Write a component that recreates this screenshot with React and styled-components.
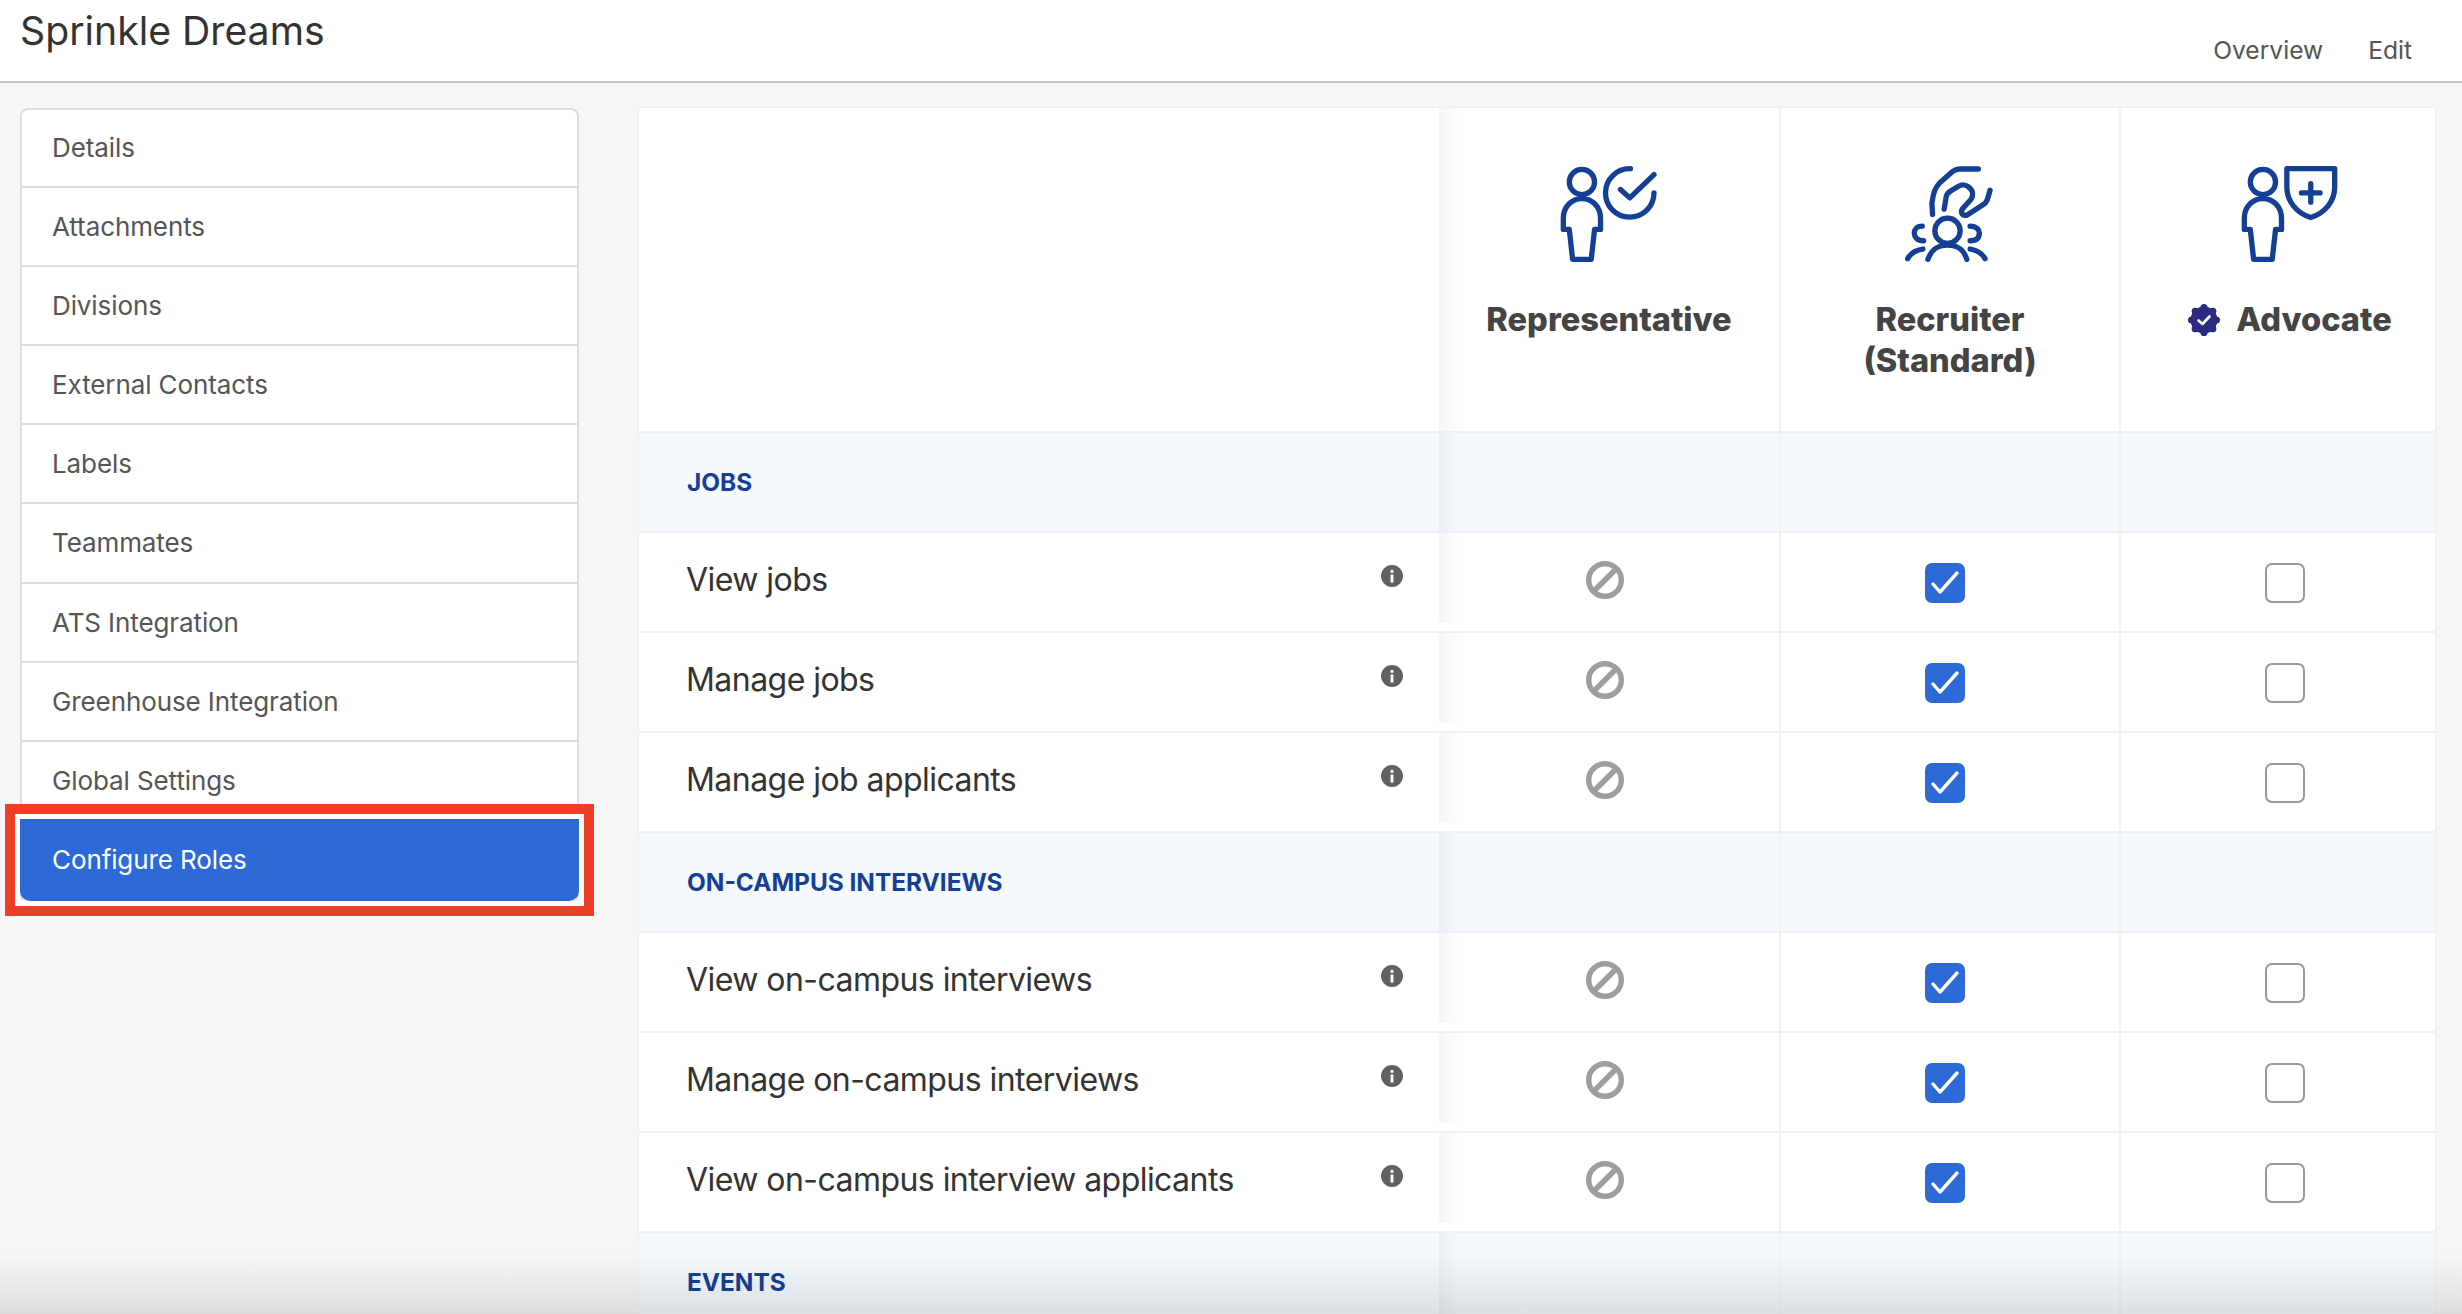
import React from "react";
import styled, { createGlobalStyle } from "styled-components";

const GlobalStyle = createGlobalStyle`
  html, body {
    margin: 0;
    padding: 0;
    background: #f6f6f6;
    font-family: Inter, "Liberation Sans", sans-serif;
  }
`;

const Page = styled.div`
  position: relative;
  width: 2462px;
  height: 1314px;
  overflow: hidden;
  background: #f6f6f6;
`;

const TopBar = styled.header`
  height: 81px;
  background: #fff;
  border-bottom: 2px solid #bcc5cc;
  display: flex;
  justify-content: space-between;
  padding: 0 50px 0 20px;
`;

const Title = styled.h1`
  margin: 8px 0 0;
  font-size: 39.2px;
  line-height: 46px;
  font-weight: 400;
  color: #333;
`;

const TopLinks = styled.nav`
  display: flex;
  gap: 45px;
  padding-top: 32px;
  font-size: 24.6px;
  line-height: 36px;
  color: #555;
`;

const Body = styled.div`
  display: flex;
  align-items: flex-start;
  padding: 25px 0 0 20px;
`;

const Sidebar = styled.ul`
  list-style: none;
  margin: 0 60px 0 0;
  padding: 0;
  flex: 0 0 559px;
  box-sizing: border-box;
  background: #fff;
  border: 2px solid #ddd;
  border-bottom: 0;
  border-radius: 8px 8px 6px 6px;
`;

const SideItem = styled.li`
  box-sizing: border-box;
  height: 79.2px;
  display: flex;
  align-items: center;
  padding-left: 30px;
  font-size: 26px;
  letter-spacing: -0.1px;
  color: #555;
  border-bottom: 2px solid #ddd;

  &:first-child {
    height: 77.6px;
  }
`;

const ActiveItem = styled.li`
  position: relative;
  box-sizing: border-box;
  height: 82px;
  margin: -2px -2px 0;
  display: flex;
  align-items: center;
  padding: 0 0 2px 32px;
  font-size: 26px;
  letter-spacing: -0.1px;
  color: #fff;
  background: #2d6ad8;
  border-radius: 0 0 10px 10px;
`;

const Highlight = styled.span`
  position: absolute;
  top: -15px;
  left: -15px;
  right: -15px;
  bottom: -15px;
  border: 10px solid #ee3f26;
  box-shadow: inset 0 0 0 5px #fff;
  pointer-events: none;
`;

const Panel = styled.section`
  width: 1796px;
  background: #fff;
  overflow: hidden;
  box-shadow: 0 0 0 1px #efefef;
`;

const Row = styled.div`
  display: grid;
  grid-template-columns: 800px 340px 340px 340px;
  width: 1820px;
  box-sizing: border-box;
  height: ${(p) => p.$height || 100}px;
  background: ${(p) => (p.$section ? "#f5f8fd" : "#fff")};
  border-bottom: 2px solid #eef0f2;
`;

const LabelCell = styled.div`
  position: relative;
  box-sizing: border-box;
  height: ${(p) => (p.$full ? "100%" : "90px")};
  display: flex;
  justify-content: space-between;
  padding: 17px 36px 0 47px;
  background: ${(p) => (p.$section ? "#f5f8fd" : "#fff")};

  &::after {
    content: "";
    position: absolute;
    top: 0;
    bottom: 0;
    left: 100%;
    width: 22px;
    background: linear-gradient(to right, rgba(0, 0, 0, 0.035), rgba(0, 0, 0, 0));
  }
`;

const RowLabel = styled.span`
  font-size: 32px;
  line-height: 60px;
  letter-spacing: -0.55px;
  color: #333;
`;

const SectionLabel = styled.span`
  font-size: 24.4px;
  line-height: 36px;
  margin: 14px 0 0 1px;
  font-weight: 700;
  color: #153f94;
`;

const Cell = styled.div`
  display: flex;
  justify-content: center;
  align-items: flex-start;
  padding: 30px 9px 0 0;
  border-left: ${(p) => (p.$first ? "0" : "2px solid #f0f2f4")};
`;

const RoleCell = styled.div`
  display: flex;
  flex-direction: column;
  align-items: center;
  padding-top: 57px;
  border-left: ${(p) => (p.$first ? "0" : "2px solid #f0f2f4")};
`;

const RoleName = styled.div`
  display: flex;
  align-items: center;
  gap: 16px;
  margin-top: 36px;
  font-size: 32.6px;
  line-height: 41px;
  font-weight: 800;
  color: #444;
  text-align: center;
`;

const CheckBox = styled.span`
  box-sizing: border-box;
  width: 40px;
  height: 40px;
  margin-left: -1px;
  border-radius: 7px;
  display: flex;
  align-items: center;
  justify-content: center;
  background: ${(p) => (p.$checked ? "#2d6ad8" : "#fff")};
  border: ${(p) => (p.$checked ? "0" : "2.5px solid #999")};
`;

const BanMark = styled.svg`
  width: 38px;
  height: 38px;
  margin-top: -2px;
`;

const InfoMark = styled.svg`
  width: 22px;
  height: 22px;
  margin-top: 15px;
`;

const BottomFade = styled.div`
  position: absolute;
  left: 0;
  right: 0;
  bottom: 0;
  height: 60px;
  background: linear-gradient(to bottom, rgba(0, 0, 0, 0), rgba(0, 0, 0, 0.1));
  pointer-events: none;
`;

const RoleSvg = styled.svg`
  display: block;
  width: 98px;
  height: 98px;
  fill: none;
  stroke: #153f94;
  stroke-width: 16;
  stroke-linecap: round;
  stroke-linejoin: round;
`;

const PersonShape = () => (
  <>
    <circle cx="246" cy="125" r="38" />
    <path d="M246 175C215 175 190 200 190 235V268H208L218 358H274L284 268H302V235C302 200 277 175 246 175Z" />
  </>
);

const RepresentativeIcon = () => (
  <RoleSvg viewBox="180 75 295 293">
    <PersonShape />
    <path d="M392 85A73 73 0 1 0 463 158" />
    <path d="M362 148L390 173L463 103" />
  </RoleSvg>
);

const RecruiterIcon = () => (
  <RoleSvg viewBox="92 75 295 293">
    <circle cx="232" cy="272" r="38" />
    <path d="M173 358C185 325 205 315 232 315C260 315 280 325 290 358" />
    <path d="M156 258C138 258 132 270 132 278C132 290 140 302 160 302" />
    <path d="M300 258C320 258 328 270 328 278C328 292 320 302 300 302" />
    <path d="M112 356C122 338 135 330 158 327" />
    <path d="M300 327C322 330 335 338 345 356" />
    <path d="M325 86H268C260 86 255 88 248 93L208 128C195 142 190 155 185 190L187 223" />
    <path d="M222 207L227 175C228 165 232 158 240 153L265 138C275 132 285 132 295 140C310 150 310 165 303 177L278 205C270 215 275 228 290 225L340 193C350 187 352 180 360 150" />
  </RoleSvg>
);

const AdvocateIcon = () => (
  <RoleSvg viewBox="180 75 295 293">
    <PersonShape />
    <path d="M318 85H462V140C462 185 430 220 390 232C350 220 318 185 318 140Z" />
    <path d="M362 158H418M390 130V186" />
  </RoleSvg>
);

const VerifiedBadge = () => {
  const bumps = Array.from({ length: 8 }, (_, i) => (i * Math.PI) / 4);
  return (
    <svg width="32" height="32" viewBox="0 0 32 32">
      <circle cx="16" cy="16" r="13.4" fill="#2d2a82" />
      {bumps.map((a) => (
        <circle key={a} cx={16 + 12.4 * Math.sin(a)} cy={16 - 12.4 * Math.cos(a)} r="3.6" fill="#2d2a82" />
      ))}
      <path d="M10.5 16.5L14.5 20L21.5 12.5" fill="none" stroke="#fff" strokeWidth="2.6" strokeLinecap="round" strokeLinejoin="round" />
    </svg>
  );
};

const Ban = () => (
  <BanMark viewBox="0 0 38 38" fill="none" stroke="#9e9e9e" strokeWidth="5.4">
    <circle cx="19" cy="19" r="16.3" />
    <path d="M8 30L30 8" />
  </BanMark>
);

const Info = () => (
  <InfoMark viewBox="0 0 22 22">
    <circle cx="11" cy="11" r="11" fill="#616161" />
    <rect x="9.6" y="9.5" width="2.8" height="8" fill="#fff" />
    <rect x="9.6" y="5" width="2.8" height="2.8" fill="#fff" />
  </InfoMark>
);

const Tick = () => (
  <svg width="30" height="30" viewBox="0 0 30 30" fill="none" stroke="#fff" strokeWidth="3.4" strokeLinecap="round" strokeLinejoin="round">
    <path d="M3 16L10 24L27 5" />
  </svg>
);

const menu = [
  "Details",
  "Attachments",
  "Divisions",
  "External Contacts",
  "Labels",
  "Teammates",
  "ATS Integration",
  "Greenhouse Integration",
  "Global Settings",
];

const sections = [
  { title: "JOBS", rows: ["View jobs", "Manage jobs", "Manage job applicants"] },
  {
    title: "ON-CAMPUS INTERVIEWS",
    rows: ["View on-campus interviews", "Manage on-campus interviews", "View on-campus interview applicants"],
  },
  { title: "EVENTS", rows: [] },
];

const SectionRow = ({ title }) => (
  <Row $section>
    <LabelCell $section $full>
      <SectionLabel>{title}</SectionLabel>
    </LabelCell>
    <Cell $first />
    <Cell />
    <Cell />
  </Row>
);

const PermissionRow = ({ label }) => (
  <Row>
    <LabelCell>
      <RowLabel>{label}</RowLabel>
      <Info />
    </LabelCell>
    <Cell $first>
      <Ban />
    </Cell>
    <Cell>
      <CheckBox $checked>
        <Tick />
      </CheckBox>
    </Cell>
    <Cell>
      <CheckBox />
    </Cell>
  </Row>
);

const App = () => (
  <Page>
    <GlobalStyle />
    <TopBar>
      <Title>Sprinkle Dreams</Title>
      <TopLinks>
        <span>Overview</span>
        <span>Edit</span>
      </TopLinks>
    </TopBar>
    <Body>
      <Sidebar>
        {menu.map((item) => (
          <SideItem key={item}>{item}</SideItem>
        ))}
        <ActiveItem>
          Configure Roles
          <Highlight />
        </ActiveItem>
      </Sidebar>
      <Panel>
        <Row $height={325}>
          <LabelCell $full />
          <RoleCell $first>
            <RepresentativeIcon />
            <RoleName>Representative</RoleName>
          </RoleCell>
          <RoleCell>
            <RecruiterIcon />
            <RoleName>
              Recruiter
              <br />
              (Standard)
            </RoleName>
          </RoleCell>
          <RoleCell>
            <AdvocateIcon />
            <RoleName>
              <VerifiedBadge />
              Advocate
            </RoleName>
          </RoleCell>
        </Row>
        {sections.map((section) => (
          <React.Fragment key={section.title}>
            <SectionRow title={section.title} />
            {section.rows.map((label) => (
              <PermissionRow key={label} label={label} />
            ))}
          </React.Fragment>
        ))}
      </Panel>
    </Body>
    <BottomFade />
  </Page>
);

export default App;
